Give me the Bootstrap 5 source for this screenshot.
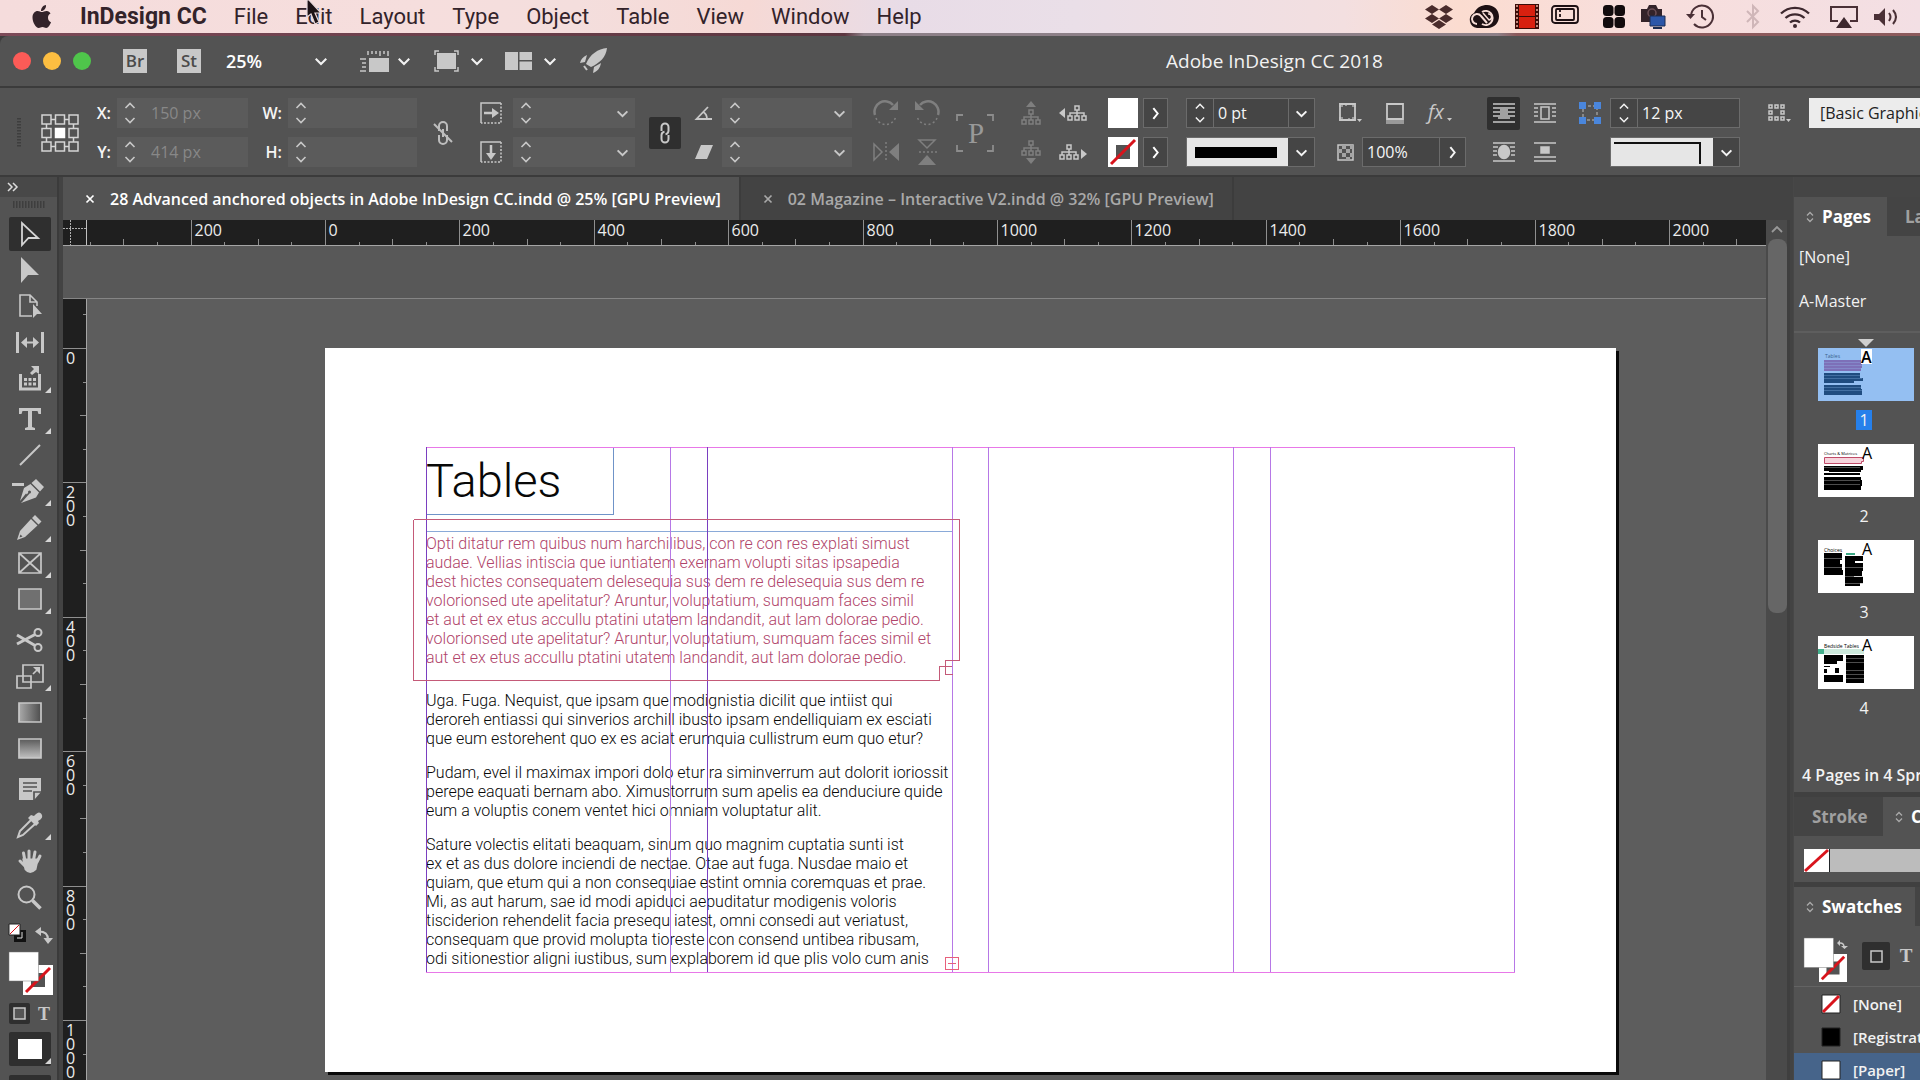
<!DOCTYPE html>
<html lang="en">
<head>
<meta charset="utf-8">
<meta name="viewport" content="width=device-width, initial-scale=1">
<title>Adobe InDesign CC 2018</title>
<link href="https://cdn.jsdelivr.net/npm/bootstrap@5.3.0/dist/css/bootstrap.min.css" rel="stylesheet">
<style>
:root{--ui:#535353;--ui-dark:#434343;--line:#3b3b3b;--ink:#c8c8c8;--ruler:#1f1f1f}
body{font-family:"Open Sans","Noto Sans",sans-serif;font-size:16px;line-height:20px;color:#f2f2f2;background:#3d3d3d;height:100vh;overflow:hidden}
button{background:none;border:0;padding:0;color:inherit;font:inherit;display:inline-flex;align-items:center;justify-content:center;flex-shrink:0}
svg{display:block;flex:none;overflow:visible}
a{color:inherit;text-decoration:none}
main{flex:1 1 0;min-height:0}
/* system menu */
.sysmenu{height:33px;padding-left:31px;padding-right:20px;background:linear-gradient(90deg,#f5dcdc 0,#f6dedd 22%,#f4dedd 30%,#f6d9d5 39%,#e8dce7 47%,#eadfe8 56%,#f3dfe0 70%,#fbdcd0 76%,#f8dedb 84%,#f3dfe4 100%);color:#33232a;font-family:Roboto,Inter,sans-serif;font-size:22px;line-height:24px}
.sysmenu nav{gap:27px}
.sysmenu .tray{gap:16px;color:#33232a}
.appname{font-weight:700;font-size:23px}
.frame-top{height:3px;background:linear-gradient(90deg,#7c4a58 0,#5c3640 44%,#8d8088 45%,#8d8088 78%,#8c5a5c 79%)}
/* application bar */
.appbar{height:52px;background:var(--ui);border-bottom:2px solid var(--line);border-radius:8px 0 0 0;padding-left:13px}
.lamp{width:18px;height:18px;border-radius:50%}
.lamps{gap:12px}
.appicon{width:24px;height:24px;background:var(--ink);color:#4b4b4b;font-weight:600;font-size:17px}
.zoomsel{appearance:none;background:none;border:0;color:#fff;font-size:18px;font-weight:600;width:80px;padding:0}
.apptitle{font-size:19px;flex:1 1 auto;padding-left:559px}
/* control bar */
.ctl{display:grid;grid-auto-flow:column;grid-template-rows:30px 30px;row-gap:9px;height:89px;padding-top:10px;background:var(--ui);border-bottom:2px solid var(--line);align-items:center;justify-items:center;color:var(--ink);
grid-template-columns:38px 44px 35px 131px 40px 129px 52px 44px 122px 59px 28px 130px 55px 40px 56px 56px 28px 51px 30px 147px 172px 33px 50px 40px 130px 69px minmax(111px,1fr)}
.two{grid-row:span 2}
.ctl label{color:#f5f5f5;font-size:16px;font-weight:600;justify-self:end;padding-right:6px}
.fld{display:flex;align-items:stretch;justify-self:stretch;height:30px;background:#5b5b5b}
.fld input,.fld select{appearance:none;min-width:0;width:0;flex:1 1 0;background:none;border:0;color:#888;font-size:16px;padding:0 0 0 8px}
.fld button{width:26px;color:var(--ink)}
.fld.on{background:#454545;border:1px solid #6b6b6b}
.fld.on input{color:#f5f5f5;padding-left:4px}
.fld.on button{color:#f5f5f5}
.fld.on button+input{border-left:1px solid #6b6b6b}
.fld.on input+button,.fld.on select+button{border-left:1px solid #6b6b6b}
.fld .strokepic{background:#e6e6e6;flex:1 1 auto}
.far{justify-self:end}
.w129{width:129px}
.box{width:25px;height:30px;background:#454545;border:1px solid #6b6b6b;color:#fff}
.dim{color:#7f7f7f}
.fxrow{gap:24px}
.pressed{background:#2f2f2f;border-radius:2px}
.stylesel{appearance:none;justify-self:stretch;align-self:stretch;background:#ececec;border:0;border-radius:0;color:#222;font-size:16px;padding:0 0 0 11px;white-space:nowrap;overflow:hidden}
/* left tools */
.tools{width:57px;background:var(--ui);color:var(--ink)}
.tools .cap{height:20px;background:#484848;padding-left:7px;flex:none}
.toolbtn{width:42px;height:34px;margin:1px 0 1px 2px;position:relative}
.toolbtn.more::after{content:"";position:absolute;right:0;bottom:2px;border:3px solid transparent;border-right-color:#d5d5d5;border-bottom-color:#d5d5d5}
.toolgap{margin-top:6px}
.gutter{width:6px;background:#434343;border-left:2px solid #3b3b3b}
/* documents */
.doctabs{height:43px;background:var(--ui-dark)}
.doctab{font-weight:600;font-size:16px;height:43px;gap:15px;color:#a9a9a9;border-right:2px solid #3c3c3c}
.doctab.current{background:var(--ui);color:#fff}
.hruler{height:26px;background:var(--ruler);border-bottom:1px solid #a5a5a5}
.band{height:53px;background:#585858;border-bottom:1px solid #858585}
.vruler{width:24px;background:var(--ruler);border-right:1px solid #a5a5a5}
.rtext{font-family:"Open Sans";font-size:16px;fill:#ececec}
.canvas{background:#5d5d5d;position:relative;overflow:hidden}
.sheet{position:absolute;left:238px;top:49px;width:1291px;height:724px;background:#fff;box-shadow:3px 3px 0 #0a0a0a;color:#080808;padding:99px 0 0 101px;font-family:Roboto,sans-serif;font-weight:300}
.sheet h1{font-size:47px;line-height:56px;font-weight:300;width:188px;height:68px;margin:0 0 16px;padding-top:6px;border-right:1px solid #6f93c8;border-bottom:1px solid #6f93c8}
.story{width:527px;border-top:1px solid #8aaad8;padding-top:2px;font-size:16px;line-height:19px;white-space:nowrap}
.story p{margin:0 0 15px}
.story .anchored{color:#b0446a;margin-bottom:24px}
.guides{position:absolute;left:0;top:0}
.vscroll{width:24px;background:#4a4a4a;border-right:3px solid #3f3f3f}
.vscroll .knob{width:19px;height:374px;border-radius:8px;background:#666;margin-left:2px}
/* right dock */
.dock{width:127px;background:var(--ui);overflow:hidden;border-left:1px solid #474747}
.dockcap{height:20px;background:#454545}
.ptabs{background:#444;height:39px;font-weight:700;font-size:17px;color:#a0a0a0;white-space:nowrap}
.ptabs button{height:39px;justify-content:flex-start;padding-left:12px}
.ptabs .plain{padding-left:18px}
.ptabs .current{background:var(--ui);color:#fff}
.ptabs .current svg{margin-right:8px;color:#aaa}
.w93{width:93px}.w89{width:89px}.w121{width:121px}
.masters{height:97px;border-bottom:2px solid #5e5e5e;padding:11px 0 0 5px;font-size:16px}
.masters button{display:block;height:20px;margin-bottom:24px}
.thumbs{padding:15px 0 0 24px;flex:0 0 auto;position:relative}
.thumb{width:96px;height:96px}
.thumb svg{margin-bottom:9px}
.thumb button{display:block;width:96px}
.thumb text{font-family:"Open Sans"}
.caption{font-size:7px}
.pno{display:block;width:16px;margin:0 0 0 38px;text-align:center;font-size:16px;line-height:20px}
.pno.sel{background:#2680eb}
.pagemark{position:absolute;left:64px;top:6px;border:8px solid transparent;border-top-color:#cfcfcf;border-bottom-width:0}
.status{height:65px;padding:33px 0 0 8px;font-size:16px;font-weight:600;white-space:nowrap;border-bottom:5px solid #404040}
.colorbar{height:51px;padding:13px 0 0 10px;border-bottom:5px solid #404040}
.ramp{height:23px;background:#bcbcbc}
.swtop{height:61px;padding:12px 0 0 10px;border-bottom:1px solid #636363}
.swrow{height:33px;padding-left:28px;gap:13px;font-size:15px;font-weight:600;white-space:nowrap}
.swrow.sel{background:#46648a}
.cursor{position:absolute;left:305px;top:0}
</style>
<script src="https://cdn.jsdelivr.net/npm/bootstrap@5.3.0/dist/js/bootstrap.bundle.min.js"></script>
</head>
<body class="d-flex flex-column">
<svg width="0" height="0" class="position-absolute" aria-hidden="true">
<defs>
<symbol id="down" viewBox="0 0 12 12"><path d="M1.500 4l4.500 4.500L10.500 4" fill="none" stroke="currentColor" stroke-width="1.800"/></symbol>
<symbol id="right" viewBox="0 0 12 12"><path d="M4 1l4 5-4 5" fill="none" stroke="currentColor" stroke-width="1.800"/></symbol>
<symbol id="step" viewBox="0 0 12 24"><path d="M1.500 7L6 2.500 10.500 7M1.500 17L6 21.500 10.500 17" fill="none" stroke="currentColor" stroke-width="1.600"/></symbol>
<symbol id="updown" viewBox="0 0 8 12"><path d="M1 4.500l3-3 3 3M1 7.500l3 3 3-3" fill="none" stroke="currentColor" stroke-width="1.300"/></symbol>
<symbol id="cross" viewBox="0 0 10 10"><path d="M1.500 1.500l7 7M8.500 1.500l-7 7" stroke="currentColor" stroke-width="1.700"/></symbol>
<symbol id="none" viewBox="0 0 30 30"><path fill="#fff" fill-rule="evenodd" d="M0 0h30v30H0zM8 8v14h14V8z"/><path d="M3 27L27 3" stroke="#d8141c" stroke-width="3"/></symbol>
<symbol id="tree" viewBox="0 0 20 16"><path d="M8 1h4v4H8zM1 11h4v4H1zM8 11h4v4H8zM15 11h4v4h-4zM10 5v6M3 11V8h14v3" fill="none" stroke="currentColor" stroke-width="1.500"/></symbol>
<symbol id="rot" viewBox="0 0 26 26"><path d="M2 15A10.500 10.500 0 0 1 20 5" fill="none" stroke="currentColor" stroke-width="2.500"/><path d="M25 1v9h-9z" fill="currentColor"/><path d="M3 18a10.500 10.500 0 0 0 20-2" fill="none" stroke="currentColor" stroke-width="1.500" stroke-dasharray="2 2.500"/></symbol>
<symbol id="flip" viewBox="0 0 26 20"><path d="M1 2v16l8-8z" fill="none" stroke="currentColor" stroke-width="1.500"/><path d="M26 1v18l-10-9z" fill="currentColor"/><path d="M13 0v20" stroke="currentColor" stroke-width="1.500" stroke-dasharray="2 2"/></symbol>
<symbol id="grip" viewBox="0 0 32 7"><path d="M0 3.500h32" stroke="#3e3e3e" stroke-width="7" stroke-dasharray="1.500 1.500"/></symbol>
</defs></svg>

<header class="sysmenu d-flex align-items-center justify-content-between flex-shrink-0">
  <nav class="d-flex align-items-center" aria-label="Menu bar">
    <a href="#" aria-label="Apple"><svg width="22" height="26" viewBox="0 0 22 26" fill="currentColor"><path d="M15 1c.2 2-.6 3.600-1.700 4.700-1 1-2.200 1.500-3.300 1.400-.1-1.700.6-3.200 1.600-4.300C12.500 1.800 13.800 1.200 15 1zM19.500 9.500c-1.700 1-2.600 2.400-2.500 4.300 0 2.100 1.200 3.600 3 4.400-.8 2.300-2.700 5.700-4.800 5.700-1.500 0-2-.9-3.700-.9s-2.300.9-3.700.9C5 24 1.500 18.400 1.500 13.500c0-4 2.400-6.500 5.200-6.500 1.700 0 3 1.100 4.300 1.100 1.200 0 2.700-1.200 4.800-1.100 1.600.1 2.900.9 3.700 2.500z"/></svg></a>
    <a href="#" class="appname">InDesign CC</a><a href="#">File</a><a href="#">Edit</a><a href="#">Layout</a><a href="#">Type</a><a href="#">Object</a><a href="#">Table</a><a href="#">View</a><a href="#">Window</a><a href="#">Help</a>
  </nav>
  <div class="tray d-flex align-items-center">
    <svg width="28" height="24" viewBox="0 0 28 24" fill="#4a2c2c"><path d="M7 0l7 4.500L7 9 0 4.500zM21 0l7 4.500L21 9l-7-4.500zM7 9l7 4.500L7 18 0 13.500zM21 9l7 4.500-7 4.500-7-4.500zM14 15l7 4.500-7 4.500-7-4.500z"/></svg>
    <svg width="30" height="24" viewBox="0 0 30 24"><path d="M8 23A8 8 0 0 1 5 8C8 2 13 0 18 0c7 0 12 5 12 11.500S25 23 19 23z" fill="#1d1013"/><path d="M8 19a5 5 0 1 1 4-8l6 7M13 19a7 7 0 1 0 0-12" fill="none" stroke="#f6dcd6" stroke-width="2"/><path d="M14 8l6 7a3 3 0 1 0-1-6" fill="none" stroke="#f6dcd6" stroke-width="1.500"/></svg>
    <svg width="24" height="25" viewBox="0 0 24 25"><path fill="#3a0c08" d="M0 0h24v25H0z"/><path fill="#d8200f" d="M4 1h16v11H4zM4 13h16v11H4z"/><path d="M2 1v24M22 1v24" stroke="#f0b0a0" stroke-width="1.500" stroke-dasharray="2 2"/></svg>
    <svg style="margin-left:-4px" class="mb-1" width="28" height="19" viewBox="0 0 28 19" fill="none" stroke="#1d1013" stroke-width="1.800"><rect x="1" y="1" width="26" height="17" rx="3"/><rect x="5" y="4" width="18" height="11" rx="1"/><path d="M9 4v11" stroke-dasharray="3 2"/></svg>
    <svg class="ms-2" width="22" height="23" viewBox="0 0 22 23" fill="#120b0d"><rect width="10.500" height="11" rx="3.500"/><rect x="11.500" width="10.500" height="11" rx="3.500"/><rect y="12" width="10.500" height="11" rx="3.500"/><rect x="11.500" y="12" width="10.500" height="11" rx="3.500"/></svg>
    <svg width="25" height="24" viewBox="0 0 25 24"><path fill="#33232a" d="M6 4l2-4h7l2 4h4v13H0V4z"/><circle cx="11" cy="8" r="4" fill="none" stroke="#6c5058" stroke-width="1.500"/><path fill="#2c56a8" stroke="#1c2c50" d="M9 11h15v10H9z"/><path stroke="#1c2c50" stroke-width="2" d="M12 23h9"/></svg>
    <svg class="ms-1" width="28" height="25" viewBox="0 0 28 25" fill="none" stroke="#4a3036" stroke-width="2"><path d="M5 12A11 11 0 1 1 8 20"/><path d="M16 6v7l4 3"/><path d="M0 10h9l-4.500 5z" fill="#4a3036" stroke="none"/></svg>
    <svg class="ms-3" width="14" height="23" viewBox="0 0 14 23" fill="none" stroke="#cfb6b8" stroke-width="2"><path d="M1 6l11 11-5 5V1l5 5L1 17"/></svg>
    <svg class="ms-1" width="30" height="22" viewBox="0 0 30 22" fill="none" stroke="#3d282e" stroke-width="2.300"><path d="M1 7.500a20 20 0 0 1 28 0M5.500 12a14 14 0 0 1 19 0M10 16.500a7.500 7.500 0 0 1 10 0"/><circle cx="15" cy="20" r="2" fill="#3d282e" stroke="none"/></svg>
    <svg class="ms-1" width="28" height="22" viewBox="0 0 28 22"><path d="M8 15H1V1h26v14h-7" fill="none" stroke="#4a3036" stroke-width="2"/><path d="M14 11l8 11H6z" fill="#3d282e"/></svg>
    <svg width="26" height="20" viewBox="0 0 26 20" fill="none" stroke="#4a3036" stroke-width="2"><path d="M0 7h5l6-6v18l-6-6H0z" fill="#4a3036" stroke="none"/><path d="M15 6q3 4 0 8M19 3q6 7 0 14"/></svg>
  </div>
</header>
<div class="frame-top flex-shrink-0"></div>

<div class="appbar d-flex align-items-center flex-shrink-0">
  <div class="lamps d-flex"><button class="lamp" style="background:#fc5b57" aria-label="Close"></button><button class="lamp" style="background:#fdbe41" aria-label="Minimise"></button><button class="lamp" style="background:#4fc54b" aria-label="Zoom"></button></div>
  <button class="appicon" style="margin-left:32px">Br</button>
  <button class="appicon" style="margin-left:30px">St</button>
  <select class="zoomsel" style="margin-left:25px" aria-label="Zoom level"><option>25%</option></select>
  <svg width="14" height="14" style="margin-left:8px"><use href="#down"/></svg>
  <button style="margin-left:32px" aria-label="View options"><svg width="29" height="22" viewBox="0 0 29 22"><path fill="#c8c8c8" d="M9 8h20v14H9z"/><path d="M8 1v4M12 1v3M16 1v3M20 1v5M24 1v3M28 1v5M0 9h6M2 13h4M2 17h4M0 21h6" stroke="#c8c8c8" stroke-width="1.500"/></svg></button>
  <svg width="14" height="14" style="margin-left:8px"><use href="#down"/></svg>
  <button style="margin-left:23px" aria-label="Screen mode"><svg width="25" height="22" viewBox="0 0 25 22"><path fill="#c8c8c8" d="M3 3h19v16H3z"/><path d="M1 5V1h4M20 1h4v4M24 17v4h-4M5 21H1v-4" fill="none" stroke="#c8c8c8" stroke-width="1.500"/></svg></button>
  <svg width="14" height="14" style="margin-left:11px"><use href="#down"/></svg>
  <button style="margin-left:21px" aria-label="Arrange documents"><svg width="27" height="18" viewBox="0 0 27 18" fill="#c8c8c8"><path d="M0 0h13v18H0zM14.500 0H27v8H14.500zM14.500 9.500H27V18H14.500z"/></svg></button>
  <svg width="14" height="14" style="margin-left:11px"><use href="#down"/></svg>
  <button style="margin-left:23px" aria-label="GPU performance"><svg width="27" height="26" viewBox="0 0 27 26" fill="#c8c8c8"><path d="M27 0C18 1 10 6 6 16l5 3C20 15 26 9 27 0zM7 7C3 9 1 11 0 15l5-1zM21 15c-1 5-3 8-8 10l1-6z"/><path d="M4 18l3 4" stroke="#c8c8c8" stroke-width="2"/></svg></button>
  <div class="apptitle">Adobe InDesign CC 2018</div>
</div>

<section class="ctl flex-shrink-0" aria-label="Control">
  <svg class="two" width="4" height="30"><path d="M2 0v30" stroke="#3e3e3e" stroke-width="4" stroke-dasharray="1.500 1.500"/></svg>
  <svg class="two" width="38" height="38" viewBox="0 0 38 38" fill="none" stroke="#d5d5d5" stroke-width="1.500"><path d="M1 1h9v9H1zM14.500 1h9v9h-9zM28 1h9v9h-9zM1 14.500h9v9H1zM28 14.500h9v9h-9zM1 28h9v9H1zM14.500 28h9v9h-9zM28 28h9v9h-9zM10 5.500h4.500M23.500 5.500H28M10 32.500h4.500M23.500 32.500H28M5.500 10v4.500M5.500 23.500V28M32.500 10v4.500M32.500 23.500V28"/><path fill="#fff" stroke="#fff" d="M14.500 14.500h9v9h-9z"/></svg>
  <label for="fx">X:</label><label for="fy">Y:</label>
  <div class="fld"><button aria-label="Step X"><svg width="12" height="24"><use href="#step"/></svg></button><input id="fx" value="150 px"></div>
  <div class="fld"><button aria-label="Step Y"><svg width="12" height="24"><use href="#step"/></svg></button><input id="fy" value="414 px"></div>
  <label for="fw">W:</label><label for="fh">H:</label>
  <div class="fld"><button aria-label="Step W"><svg width="12" height="24"><use href="#step"/></svg></button><input id="fw"></div>
  <div class="fld"><button aria-label="Step H"><svg width="12" height="24"><use href="#step"/></svg></button><input id="fh"></div>
  <button class="two" aria-label="Constrain"><svg width="20" height="22" viewBox="0 0 20 22" fill="none" stroke="#bdbdbd" stroke-width="2"><path d="M6 9V4a4 4 0 0 1 8 0v5M6 13v5a4 4 0 0 0 8 0v-5M10 7v8M1 2l18 18"/></svg></button>
  <svg width="22" height="22" viewBox="0 0 22 22"><path d="M1 21V1h20" fill="none" stroke="currentColor" stroke-width="1.500"/><path d="M21 1v20H1" fill="none" stroke="currentColor" stroke-width="1.500" stroke-dasharray="2 1.500"/><path d="M4 11h10" stroke="currentColor" stroke-width="2.500"/><path d="M12 6l7 5-7 5z" fill="currentColor"/></svg>
  <svg width="22" height="22" viewBox="0 0 22 22"><path d="M1 21V1h20" fill="none" stroke="currentColor" stroke-width="1.500"/><path d="M21 1v20H1" fill="none" stroke="currentColor" stroke-width="1.500" stroke-dasharray="2 1.500"/><path d="M11 4v10" stroke="currentColor" stroke-width="2.500"/><path d="M6 12l5 7 5-7z" fill="currentColor"/></svg>
  <div class="fld"><button aria-label="Step scale X"><svg width="12" height="24"><use href="#step"/></svg></button><input aria-label="Scale X"><button aria-label="Scale X list"><svg width="13" height="13"><use href="#down"/></svg></button></div>
  <div class="fld"><button aria-label="Step scale Y"><svg width="12" height="24"><use href="#step"/></svg></button><input aria-label="Scale Y"><button aria-label="Scale Y list"><svg width="13" height="13"><use href="#down"/></svg></button></div>
  <button class="two pressed px-2 py-1" aria-label="Link scale"><svg width="16" height="24" viewBox="0 0 16 24" fill="none" stroke="#c8c8c8" stroke-width="2"><path d="M4.500 10V6a3.500 3.500 0 0 1 7 0v4a3.500 3.500 0 0 1-3 3.200M11.500 14v4a3.500 3.500 0 0 1-7 0v-4a3.500 3.500 0 0 1 3-3.200"/></svg></button>
  <svg class="me-2" width="18" height="14" viewBox="0 0 18 14" fill="none" stroke="currentColor" stroke-width="1.800"><path d="M13 1L1.500 13H17M8 6q4 2 4 7"/></svg>
  <svg class="me-2" width="18" height="14" viewBox="0 0 18 14" fill="currentColor"><path d="M6 0h12l-6 14H0z"/></svg>
  <div class="fld"><button aria-label="Step angle"><svg width="12" height="24"><use href="#step"/></svg></button><input aria-label="Angle"><button aria-label="Angle list"><svg width="13" height="13"><use href="#down"/></svg></button></div>
  <div class="fld"><button aria-label="Step shear"><svg width="12" height="24"><use href="#step"/></svg></button><input aria-label="Shear"><button aria-label="Shear list"><svg width="13" height="13"><use href="#down"/></svg></button></div>
  <svg class="far me-2 dim" width="26" height="26"><use href="#rot"/></svg>
  <svg class="far me-2 dim" width="26" height="20"><use href="#flip"/></svg>
  <svg class="dim" width="26" height="26"><use href="#rot" transform="matrix(-1 0 0 1 26 0)"/></svg>
  <svg class="dim" width="24" height="26"><g transform="rotate(90 12 13)"><use href="#flip" x="-1" y="3" width="26" height="20"/></g></svg>
  <svg class="two" width="38" height="38" viewBox="0 0 38 38"><path d="M1 7V1h6M31 1h6v6M37 31v6h-6M7 37H1v-6" fill="none" stroke="#8c8c8c" stroke-width="1.800"/><text x="12" y="29" font-family="Liberation Serif" font-size="29" fill="#999">P</text></svg>
  <svg class="dim" width="20" height="26" viewBox="0 0 20 26"><path d="M5 7l5-6 5 6z" fill="currentColor"/><use href="#tree" y="9" width="20" height="16"/></svg>
  <svg class="dim" width="20" height="26" viewBox="0 0 20 26"><path d="M5 19l5 6 5-6z" fill="currentColor"/><use href="#tree" y="1" width="20" height="16"/></svg>
  <svg width="28" height="16" viewBox="0 0 28 16"><path d="M6 3v10L0 8z" fill="currentColor"/><use href="#tree" x="8" width="20" height="16"/></svg>
  <svg width="28" height="16" viewBox="0 0 28 16"><path d="M22 5v10l6-5z" fill="currentColor"/><use href="#tree" x="0" width="20" height="16"/></svg>
  <svg class="far" width="30" height="30"><path fill="#fff" d="M0 0h30v30H0z"/></svg>
  <svg class="far" width="30" height="30"><use href="#none"/></svg>
  <button class="far box" aria-label="Fill list"><svg width="13" height="13"><use href="#right"/></svg></button>
  <button class="far box" aria-label="Stroke list"><svg width="13" height="13"><use href="#right"/></svg></button>
  <div class="fld on far w129"><button aria-label="Step weight"><svg width="12" height="22"><use href="#step"/></svg></button><input aria-label="Stroke weight" value="0 pt"><button aria-label="Weight list"><svg width="13" height="13"><use href="#down"/></svg></button></div>
  <div class="fld on far w129"><div class="strokepic d-flex align-items-center px-2"><svg width="82" height="11"><path d="M0 0h82v11H0z"/></svg></div><button aria-label="Stroke type"><svg width="13" height="13"><use href="#down"/></svg></button></div>
  <div class="fxrow d-flex align-items-center w-100 ps-4">
    <svg width="23" height="20" viewBox="0 0 23 20"><path d="M1 1h15v16H1z" fill="none" stroke="currentColor" stroke-width="1.800"/><path d="M0 0h4v4H0zM13 0h4v4h-4zM0 14h4v4H0zM13 14h4v4h-4zM6 0h2v3H6zM9 15h2v3H9z" fill="currentColor" fill-opacity=".600"/><path d="M18 16h5l-2.500 3z" fill="currentColor"/></svg>
    <svg width="18" height="21" viewBox="0 0 18 21"><path d="M1 1h16v15H1z" fill="none" stroke="currentColor" stroke-width="1.800"/><path d="M0 17h18v4H0z" fill="#999"/></svg>
    <svg width="24" height="22" viewBox="0 0 24 22"><text x="0" y="17" font-family="Open Sans" font-style="italic" font-size="20" fill="currentColor">fx</text><path d="M19 16h5l-2.500 3z" fill="currentColor"/></svg>
  </div>
  <div class="d-flex align-items-center w-100 ps-4">
    <svg style="margin-left:-2px" width="17" height="17" viewBox="0 0 17 17"><path d="M1 1h15v15H1z" fill="none" stroke="currentColor" stroke-width="1.500"/><path d="M5 1h4v4H5zM1 5h4v4H1zM9 5h4v4H9zM5 9h4v4H5zM13 9h3v4h-3zM13 1h3v4h-3zM9 13h4v3H9z" fill="#a5a5a5"/></svg>
    <div class="fld on ms-2" style="width:104px"><input aria-label="Opacity" value="100%"><button aria-label="Opacity slider"><svg width="13" height="13"><use href="#right"/></svg></button></div>
  </div>
  <button class="pressed" style="width:33px;height:33px" aria-label="No text wrap"><svg width="22" height="20" viewBox="0 0 22 20" stroke="currentColor" stroke-width="1.600"><path d="M0 1h22M0 5h22M0 9h22M0 13h22M0 19h22"/><path d="M7 7h8M7 11h8M5 15h12"/></svg></button>
  <svg width="22" height="20" viewBox="0 0 22 20" stroke="currentColor" stroke-width="1.500" fill="none"><path d="M0 1h22M0 19h22M0 5h5M17 5h5M0 9h4M18 9h4M0 13h4M18 13h4"/><ellipse cx="11" cy="10" rx="5.500" ry="6.500" fill="currentColor"/></svg>
  <svg width="22" height="20" viewBox="0 0 22 20" stroke="currentColor" stroke-width="1.500" fill="none"><path d="M0 1h22M0 19h22M0 5h4M18 5h4M0 9h4M18 9h4M0 13h4M18 13h4M7 4h8v12H7z"/></svg>
  <svg width="22" height="20" viewBox="0 0 22 20" stroke="currentColor" stroke-width="1.500" fill="none"><path d="M0 1h22M0 15h22M0 19h22"/><path d="M7 5h8v6H7z" fill="currentColor"/></svg>
  <svg width="22" height="22" viewBox="0 0 22 22"><path d="M4 4h14v14H4z" fill="none" stroke="#999" stroke-width="1.500" stroke-dasharray="3 2"/><path fill="#4a86dc" d="M0 0h7v7H0zM15 0h7v7h-7zM0 15h7v7H0zM15 15h7v7h-7z"/></svg>
  <span></span>
  <div class="fld on"><button aria-label="Step corner"><svg width="12" height="22"><use href="#step"/></svg></button><input aria-label="Corner size" value="12 px"></div>
  <div class="fld on"><div class="strokepic"><svg width="98" height="28"><path d="M3 5h86v21" fill="none" stroke="#111" stroke-width="2"/></svg></div><button aria-label="Corner shape"><svg width="13" height="13"><use href="#down"/></svg></button></div>
  <svg class="ms-2" width="22" height="20" viewBox="0 0 22 20" fill="none" stroke="currentColor" stroke-width="1.500"><path d="M1 2h3v3H1zM7 2h3v3H7zM13 2h3v3h-3zM1 8h3v3H1zM13 8h3v3h-3zM1 14h3v3H1zM7 14h3v3H7zM13 14h3v3h-3z"/><path d="M18 16h5l-2.500 3z" fill="currentColor" stroke="none"/></svg>
  <span></span>
  <select class="stylesel" aria-label="Object style"><option>[Basic Graphics Frame]</option></select>
</section>

<main class="d-flex overflow-hidden">
  <aside class="tools d-flex flex-column align-items-center flex-shrink-0" aria-label="Tools">
    <div class="cap w-100 d-flex align-items-center"><svg width="12" height="8" viewBox="0 0 12 8" fill="none" stroke="#ddd" stroke-width="1.500"><path d="M1 0l4 4-4 4M6 0l4 4-4 4"/></svg></div>
    <svg width="32" height="7" class="mt-1 mb-2"><use href="#grip"/></svg>
    <button class="toolbtn pressed" aria-label="Selection"><svg width="20" height="26" viewBox="0 0 20 26" fill="none" stroke="#d5d5d5" stroke-width="1.800"><path d="M2 2v22l6.500-7H18z"/></svg></button>
    <button class="toolbtn" aria-label="Direct selection"><svg width="20" height="26" viewBox="0 0 20 26" fill="#c8c8c8"><path d="M1 0v26l7-8h11z"/></svg></button>
    <button class="toolbtn" aria-label="Page"><svg width="24" height="24" viewBox="0 0 24 24" fill="none" stroke="#c8c8c8" stroke-width="1.600"><path d="M14 22H2V1h10l7 7v4M12 1v7h7"/><path d="M15 10v14l4-4h5z" fill="#c8c8c8" stroke="none"/></svg></button>
    <button class="toolbtn" aria-label="Gap"><svg width="28" height="21" viewBox="0 0 28 21"><path d="M1.500 0v21M26.500 0v21" stroke="#c8c8c8" stroke-width="3"/><path d="M7 10.500h14" stroke="#c8c8c8" stroke-width="2"/><path d="M5 10.500L11 5v11zM23 10.500L17 5v11z" fill="#c8c8c8"/></svg></button>
    <button class="toolbtn more" aria-label="Content collector"><svg width="22" height="25" viewBox="0 0 22 25"><path d="M1.500 8v15h19V8" fill="none" stroke="#c8c8c8" stroke-width="3"/><path d="M5 12h3v3H5zM9.500 12h3v3h-3zM14 12h3v3h-3zM5 16.500h3v3H5zM9.500 16.500h3v3h-3zM14 16.500h3v3h-3z" fill="#c8c8c8"/><path d="M20 0v8l-3-2-4 3-2-2 4-4-3-3z" fill="#c8c8c8"/></svg></button>
    <button class="toolbtn more toolgap" aria-label="Type"><svg width="22" height="22" viewBox="0 0 22 22" fill="#c8c8c8"><path d="M0 0h22v6h-2.500l-1-3H13v16l3 1v2H6v-2l3-1V3H3.500l-1 3H0z"/></svg></button>
    <button class="toolbtn" aria-label="Line"><svg width="22" height="22"><path d="M1 21L21 1" stroke="#c8c8c8" stroke-width="2"/></svg></button>
    <button class="toolbtn more" aria-label="Pen"><svg class="me-1" width="32" height="24" viewBox="0 0 32 24"><path fill="#c8c8c8" d="M0 4h12v3H0zM24 0l8 8-4 4.500-8.500-8.500zM18.500 5l8.500 8.500-3 5L9 24l6-8.500-1-1L8 22l4-13z"/><path d="M9 23l8-9" stroke="#535353" stroke-width="1.500"/><circle cx="17.500" cy="13" r="1.500" fill="#535353"/></svg></button>
    <button class="toolbtn more" aria-label="Pencil"><svg width="25" height="25" viewBox="0 0 25 25" fill="#c8c8c8"><path d="M18 0l6.500 6.500-3 3L15 3zM14 4l6.500 6.500L8 22l-8 3 3-9z"/><path d="M2.500 22.500l1-3 2 2z" fill="#535353"/></svg></button>
    <button class="toolbtn more" aria-label="Rectangle frame"><svg width="24" height="22" fill="none" stroke="#c8c8c8" stroke-width="1.700"><path d="M1 1h22v20H1zM1 1l22 20M23 1L1 21"/></svg></button>
    <button class="toolbtn more" aria-label="Rectangle"><svg width="24" height="22" fill="#707070" stroke="#c8c8c8" stroke-width="1.700"><path d="M1 1h22v20H1z"/></svg></button>
    <button class="toolbtn toolgap" aria-label="Scissors"><svg width="27" height="24" viewBox="0 0 27 24" fill="none" stroke="#c8c8c8" stroke-width="2"><circle cx="22" cy="4.500" r="3.500"/><circle cx="22" cy="19.500" r="3.500"/><path d="M19 6.500L1 16M19 17.500L1 7" stroke-width="3"/></svg></button>
    <button class="toolbtn more" aria-label="Free transform"><svg width="28" height="25" viewBox="0 0 28 25" fill="none" stroke="#c8c8c8" stroke-width="1.700"><path d="M7 1h20v17H7zM1 12h14v12H1zM17 10l5-5"/><path d="M24 3v7l-7-7z" fill="#c8c8c8" stroke="none"/></svg></button>
    <button class="toolbtn" aria-label="Gradient swatch"><svg width="24" height="21"><defs><linearGradient id="g1"><stop stop-color="#aaa"/><stop offset="1" stop-color="#4d4d4d"/></linearGradient><linearGradient id="g2" x2="0" y2="1"><stop stop-color="#5a5a5a"/><stop offset="1" stop-color="#c0c0c0"/></linearGradient></defs><path d="M1 1h22v19H1z" fill="url(#g1)" stroke="#c8c8c8" stroke-width="1.700"/></svg></button>
    <button class="toolbtn" aria-label="Gradient feather"><svg width="24" height="21"><path d="M1 1h22v19H1z" fill="url(#g2)" stroke="#c8c8c8" stroke-width="1.700"/></svg></button>
    <button class="toolbtn toolgap" aria-label="Note"><svg width="22" height="22" viewBox="0 0 22 22"><path d="M0 0h22v14l-7 8H0z" fill="#c8c8c8"/><path d="M4 5h14M4 9h14M4 13h9M15 22v-8h7" fill="none" stroke="#535353" stroke-width="1.700"/></svg></button>
    <button class="toolbtn more" aria-label="Eyedropper"><svg width="25" height="26" viewBox="0 0 25 26"><path d="M14 8L3 19l-2 6 5-2L18 12" fill="none" stroke="#c8c8c8" stroke-width="2"/><path d="M17 4q5-6 7.500-2T21 9l1 2-3 3-8-8 3-3z" fill="#c8c8c8"/></svg></button>
    <button class="toolbtn" aria-label="Hand"><svg width="24" height="25" viewBox="0 0 24 25" fill="none" stroke="#c8c8c8" stroke-width="3" stroke-linecap="round"><path d="M7 12L5.500 4M11 11V2M15.500 11l1.500-8M19 13l3-6M7 17l-5-5"/><path d="M6 11h13l-2 9q-5 5-9 0z" fill="#c8c8c8"/></svg></button>
    <button class="toolbtn" aria-label="Zoom"><svg width="25" height="25" viewBox="0 0 25 25" fill="none" stroke="#c8c8c8"><circle cx="9.500" cy="9.500" r="8" stroke-width="2"/><path d="M15.500 15.500l8 8" stroke-width="3.500"/></svg></button>
    <div class="d-flex justify-content-between w-100 mt-2 ps-2 pe-1"><svg width="18" height="19" viewBox="0 0 18 19"><path fill="#111" d="M6 7h12v12H6z"/><path d="M9 15h5V9" fill="none" stroke="#ddd"/><path fill="#fff" stroke="#222" d="M1 1h11v11H1z"/><path d="M2 11L11 2" stroke="#d8141c"/></svg><svg class="mt-1" width="18" height="17" viewBox="0 0 18 17"><path d="M4 4.500q9 0 9 8" fill="none" stroke="#c8c8c8" stroke-width="2"/><path d="M6 0v9L0 4.500zM8.500 11H18L13 17z" fill="#c8c8c8"/></svg></div>
    <svg width="44" height="43" class="mt-2 ms-1"><use href="#none" x="14" y="13" width="30" height="30"/><path fill="#fff" stroke="#777" stroke-width=".500" d="M0 0h29.500v29H0z"/></svg>
    <div class="d-flex w-100 mt-2 align-items-center" style="padding-left:9px"><button class="pressed" style="width:21px;height:21px" aria-label="Container"><svg width="13" height="13"><path d="M1 1h11v11H1z" fill="#555" stroke="#c8c8c8" stroke-width="1.500"/></svg></button><button class="ms-2" style="font-family:'Liberation Serif';font-weight:700;font-size:18px;color:#c8c8c8" aria-label="Text">T</button></div>
    <button class="toolbtn more pressed mt-2" aria-label="Screen mode"><svg width="24" height="20"><path fill="#fff" d="M0 0h24v20H0z"/></svg></button>
    <button class="toolbtn pressed mt-2" aria-label="Options"></button>
  </aside>
  <div class="gutter flex-shrink-0"></div>

  <div class="d-flex flex-column flex-grow-1 overflow-hidden">
    <div class="doctabs d-flex flex-shrink-0 text-nowrap">
      <button class="doctab current" style="padding:0 18px 0 22px"><svg width="10" height="10"><use href="#cross"/></svg>28 Advanced anchored objects in Adobe InDesign CC.indd @ 25% [GPU Preview]</button>
      <button class="doctab" style="padding:0 18px 0 22px"><svg width="10" height="10"><use href="#cross"/></svg>02 Magazine – Interactive V2.indd @ 32% [GPU Preview]</button>
    </div>
    <div class="d-flex flex-grow-1 overflow-hidden">
      <div class="d-flex flex-column flex-grow-1 overflow-hidden">
        <svg id="hr" class="hruler w-100 overflow-hidden" aria-label="Horizontal ruler"></svg>
        <div class="band flex-shrink-0"></div>
        <div class="d-flex flex-grow-1 overflow-hidden">
          <svg id="vr" class="vruler overflow-hidden h-100" aria-label="Vertical ruler"></svg>
          <div class="canvas flex-grow-1">
            <article class="sheet">
              <h1>Tables</h1>
              <div class="story">
                <p class="anchored">Opti ditatur rem quibus num harchilibus, con re con res explati simust<br>audae. Vellias intiscia que iuntiatem exernam volupti sitas ipsapedia<br>dest hictes consequatem delesequia sus dem re delesequia sus dem re<br>volorionsed ute apelitatur? Aruntur, voluptatium, sumquam faces simil<br>et aut et ex etus accullu ptatini utatem landandit, aut lam dolorae pedio.<br>volorionsed ute apelitatur? Aruntur, voluptatium, sumquam faces simil et<br>aut et ex etus accullu ptatini utatem landandit, aut lam dolorae pedio.</p>
                <p>Uga. Fuga. Nequist, que ipsam que modignistia dicilit que intiist qui<br>deroreh entiassi qui sinverios archill ibusto ipsam endelliquiam ex esciati<br>que eum estorehent quo ex es aciat erumquia cullistrum eum quo etur?</p>
                <p>Pudam, evel il maximax impori dolo etur ra siminverrum aut dolorit ioriossit<br>perepe eaquati bernam abo. Ximustorrum sum apelis ea denduciure quide<br>eum a voluptis conem ventet hici omniam voluptatur alit.</p>
                <p>Sature volectis elitati beaquam, sinum quo magnim cuptatia sunti ist<br>ex et as dus dolore inciendi de nectae. Otae aut fuga. Nusdae maio et<br>quiam, que etum qui a non consequiae estint omnia coremquas et prae.<br>Mi, as aut harum, sae id modi apiduci aepuditatur modigenis voloris<br>tisciderion rehendelit facia presequ iatest, omni consedi aut veriatust,<br>consequam que provid molupta tioreste con consend untibea ribusam,<br>odi sitionestior aligni iustibus, sum explaborem id que plis volo cum anis</p>
              </div>
              <svg class="guides" width="1291" height="724" viewBox="0 0 1291 724" fill="none" shape-rendering="crispEdges">
                <path stroke="#e878e8" d="M101 99.500H1190M101 624.500H1190"/>
                <path stroke="#b678e6" d="M345.500 99V624M627.500 99V624M663.500 99V624M908.500 99V624M945.500 99V624M1189.500 99V624"/>
                <path stroke="#7a3fc0" d="M101.500 99V624M382.500 99V624"/>
                <path stroke="#c45a78" d="M88.500 171.500H634.500V312.500H620.500V326.500H627.500M627 318.500H614.500V332.500H88.500V171.500"/>
                <path stroke="#e8607c" d="M620.500 609.500h13v12h-13zM623 615.500h8"/>
              </svg>
            </article>
          </div>
        </div>
      </div>
      <div class="vscroll flex-shrink-0"><div class="d-flex justify-content-center pt-1 pb-1"><svg width="12" height="11" viewBox="0 0 12 11"><path d="M1 8l5-5 5 5" fill="none" stroke="#999" stroke-width="1.800"/></svg></div><div class="knob"></div></div>
    </div>
  </div>
  <div class="gutter flex-shrink-0 border-0" style="width:3px"></div>

  <aside class="dock d-flex flex-column flex-shrink-0">
    <div class="dockcap flex-shrink-0"></div>
    <div class="ptabs d-flex flex-shrink-0"><button class="current w93"><svg width="8" height="12"><use href="#updown"/></svg>Pages</button><button class="plain">Layers</button></div>
    <div class="masters flex-shrink-0"><button>[None]</button><button>A-Master</button></div>
    <div class="thumbs">
      <div class="pagemark"></div>
      <div class="thumb"><button aria-label="Page 1"><svg width="96" height="53"><path fill="#94bff2" d="M0 0h96v53H0z"/><text class="caption" x="7" y="10" fill="#3a5f8c" style="font-size:5px">Tables</text><path fill="#7d70b8" d="M6 12h37v3h1v5h-1v3H6z"/><path fill="#1f4c80" d="M6 25h36v5h3v3h-9v2H6zM6 37h37v4h1v6H6z"/><path stroke="#94bff2" stroke-opacity=".300" d="M6 14.500h38M6 17.500h38M6 20.500h38M6 27.500h38M6 30.500h38M6 39.500h38M6 42.500h38"/><path fill="#fff" d="M43 1h11v15H43z"/><text x="43" y="15" font-weight="600" font-size="16">A</text></svg></button><span class="pno sel">1</span></div>
      <div class="thumb"><button aria-label="Page 2"><svg width="96" height="53"><path fill="#fff" d="M0 0h96v53H0z"/><text class="caption" x="6" y="11" style="font-size:4px">Charts &amp; Matrices</text><path stroke="#c04a68" fill="#f6d4dc" d="M6.500 13.500h39v4h-2v2h-37z"/><path d="M6 22h39v4h-2v2h-32v-1H6zM6 29h36v2H6zM6 33h37v3h1v6h-1v4H6z"/><path stroke="#999" d="M6 23.500h36M6 36.500h36M6 40.500h36" stroke-opacity=".500"/><text x="44" y="15" font-size="16">A</text></svg></button><span class="pno">2</span></div>
      <div class="thumb"><button aria-label="Page 3"><svg width="96" height="53"><path fill="#fff" d="M0 0h96v53H0z"/><text class="caption" x="6" y="12" style="font-size:5px">Choices</text><path stroke="#3aa884" stroke-width="2" d="M28 14h9"/><path d="M6 13h18v7h-2v4h2v6h1v5H6zM27 16h18v5h-8v2h8v8h-1v5h-8v1h9v6h-3v3H27z"/><path stroke="#aaa" d="M6 18.500h18M6 27.500h18M27 27.500h18M27 36.500h18M27 43.500h18" stroke-opacity=".500"/><text x="44" y="15" font-size="16">A</text></svg></button><span class="pno">3</span></div>
      <div class="thumb"><button aria-label="Page 4"><svg width="96" height="53"><path fill="#fff" d="M0 0h96v53H0z"/><text class="caption" x="6" y="12" style="font-size:5px">Bedside Tables</text><path fill="#cdeadd" d="M0 13h46v5H0z"/><path fill="#43b08c" d="M0 13h6v5H0z"/><path d="M6 19h19v6h-6v3H6zM6 30h6v1H6zM6 33h3v4H6zM17 32h4v5h-4zM6 39h19v7H6zM28 19h18v28H28z"/><path stroke="#999" d="M28 22.500h18M28 26.500h18M28 34.500h18M28 38.500h18M28 42.500h18" stroke-opacity=".500"/><text x="44" y="15" font-size="16">A</text></svg></button><span class="pno">4</span></div>
    </div>
    <div class="status flex-shrink-0">4 Pages in 4 Spreads</div>
    <div class="ptabs d-flex flex-shrink-0"><button class="w89 plain">Stroke</button><button class="current"><svg width="8" height="12"><use href="#updown"/></svg>Color</button></div>
    <div class="colorbar d-flex flex-shrink-0"><svg width="25" height="23"><path fill="#fff" d="M0 0h25v23H0z"/><path d="M1 22L24 1" stroke="#d8141c" stroke-width="3"/></svg><div class="ramp flex-grow-1 ms-0 border-start border-dark"></div></div>
    <div class="ptabs d-flex flex-shrink-0"><button class="current w121"><svg width="8" height="12"><use href="#updown"/></svg>Swatches</button></div>
    <div class="swtop d-flex flex-shrink-0"><svg width="44" height="44"><use href="#none" x="15" y="16" width="28" height="28"/><path fill="#fff" stroke="#777" stroke-width=".500" d="M0 0h29.500v29.500H0z"/><path d="M36 5q4 0 4 4" fill="none" stroke="#c8c8c8" stroke-width="1.500"/><path d="M36 2v6l-3-3zM37 8h7l-3.500 3z" fill="#c8c8c8"/></svg><button class="pressed mt-1" style="width:28px;height:28px;margin-left:14px" aria-label="Formatting affects container"><svg width="13" height="13"><path d="M1 1h11v11H1z" fill="none" stroke="#c8c8c8" stroke-width="1.500"/></svg></button><button class="mt-1" style="width:20px;height:28px;margin-left:6px;font-family:'Liberation Serif';font-weight:700;font-size:19px;color:#c8c8c8" aria-label="Formatting affects text">T</button></div>
    <div class="swrow d-flex align-items-center flex-shrink-0"><svg width="18" height="18"><path fill="#fff" stroke="#222" d="M0 0h18v18H0z"/><path d="M1 17L17 1" stroke="#d8141c" stroke-width="3"/></svg>[None]</div>
    <div class="swrow d-flex align-items-center flex-shrink-0"><svg width="18" height="18"><path stroke="#222" d="M0 0h18v18H0z"/></svg>[Registration]</div>
    <div class="swrow sel d-flex align-items-center flex-shrink-0"><svg width="18" height="18"><path fill="#fff" stroke="#222" d="M0 0h18v18H0z"/></svg>[Paper]</div>
  </aside>
</main>
<svg class="cursor" width="18" height="26" viewBox="0 0 18 26"><path d="M2 0v17l4-3 4 10 4-2-4-9h6L4 0z" fill="#1c1216" stroke="#e8d8da" stroke-width="1.200"/></svg>
<script>
// Ruler ticks: 200 document pixels take 134.4 screen pixels at this zoom
const NS='http://www.w3.org/2000/svg', PITCH=134.4;
function mk(p,n,a,t){const e=document.createElementNS(NS,n);for(const k in a)e.setAttribute(k,a[k]);if(t!=null)e.textContent=t;p.appendChild(e)}
const h=document.getElementById('hr'), v=document.getElementById('vr');
for(let i=-8;i<50;i++){
  const x=Math.round(262+i*PITCH/4)+.5, m=((i%4)+4)%4;
  if(x>24) mk(h,'path',{d:`M${x} ${m===0?0:m===2?19:22}V26`,stroke:'#8f8f8f'});
  if(m===0&&x>24&&i<=40) mk(h,'text',{x:x+3,y:16,class:'rtext'},Math.abs(i/4*200));
  const y=Math.round(49+i*PITCH/4)+.5;
  mk(v,'path',{d:`M${m===0?0:m===2?17:20} ${y}H24`,stroke:'#8f8f8f'});
  if(m===0&&i>=0&&i<=20) String(i/4*200).split('').forEach((c,n)=>mk(v,'text',{x:3,y:y+15+n*14,class:'rtext'},c));
}
mk(h,'path',{d:'M23.5 0V26',stroke:'#c0c0c0'});
mk(h,'path',{d:'M0 8.5H23M7.5 0V26',stroke:'#b0b0b0','stroke-dasharray':'2 1'});
</script>
</body>
</html>
